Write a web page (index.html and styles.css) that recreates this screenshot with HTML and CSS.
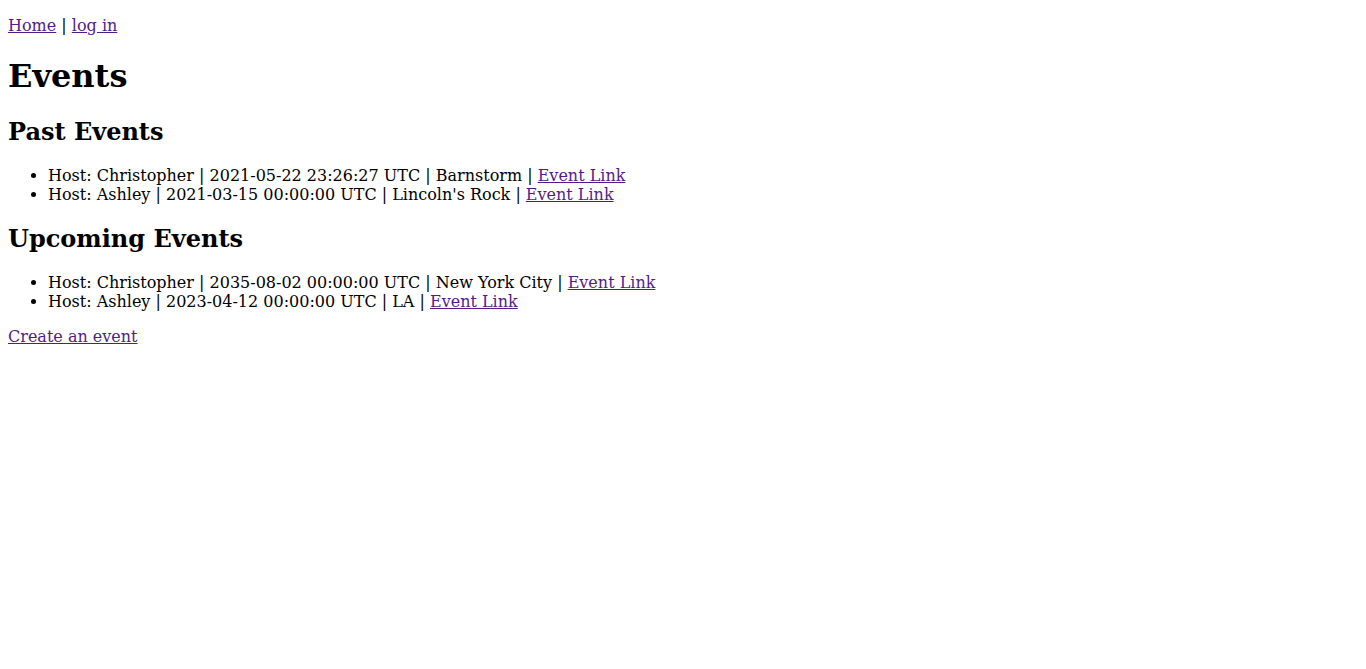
FILE: index.html
```html
<!DOCTYPE html>
<html>
<head>
<meta charset="utf-8">
<title>Events</title>
<link rel="stylesheet" href="styles.css">
</head>
<body class="page">
<p class="nav"><a class="link" href="#home">Home</a> | <a class="link" href="#login">log in</a></p>
<h1 class="title">Events</h1>
<h2 class="section">Past Events</h2>
<ul class="events">
<li>Host: Christopher | 2021-05-22 23:26:27 UTC | Barnstorm | <a class="link" href="#e1">Event Link</a></li>
<li>Host: Ashley | 2021-03-15 00:00:00 UTC | Lincoln's Rock | <a class="link" href="#e2">Event Link</a></li>
</ul>
<h2 class="section">Upcoming Events</h2>
<ul class="events">
<li>Host: Christopher | 2035-08-02 00:00:00 UTC | New York City | <a class="link" href="#e3">Event Link</a></li>
<li>Host: Ashley | 2023-04-12 00:00:00 UTC | LA | <a class="link" href="#e4">Event Link</a></li>
</ul>
<a class="link" href="#create">Create an event</a>
</body>
</html>
```
FILE: styles.css
```css
.page {
  margin: 8px;
  font-family: "DejaVu Serif", serif;
  font-size: 16px;
  color: #000;
  background: #fff;
}
.link {
  color: #551a8b;
  text-decoration: underline;
}
.nav {
  margin: 8px 0 16px;
  padding-bottom: 1px;
}
.title {
  font-size: 2em;
  margin: 0.67em 0;
  font-weight: bold;
}
.section {
  font-size: 1.5em;
  margin: 0.83em 0;
  font-weight: bold;
}
.events {
  margin: 16px 0;
  padding-left: 40px;
  list-style: disc;
}
```
